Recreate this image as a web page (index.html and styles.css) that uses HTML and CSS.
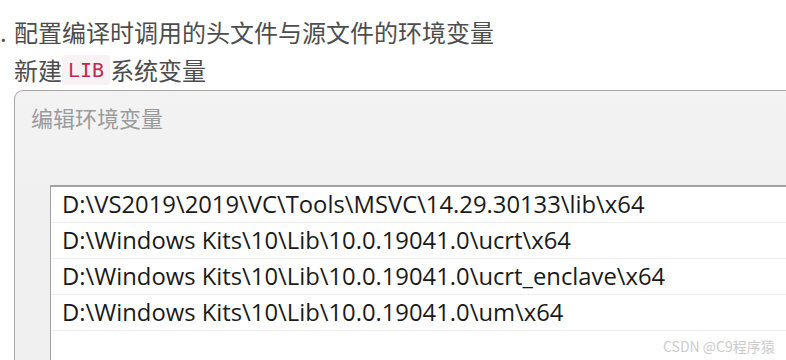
FILE: index.html
```html
<!DOCTYPE html>
<html lang="zh-CN">
<head>
<meta charset="utf-8">
<link rel="stylesheet" href="styles.css">
</head>
<body>
<div class="article">
  <p class="step"><span class="num">.</span>配置编译时调用的头文件与源文件的环境变量</p>
  <p class="sub">新建<code class="code">LIB</code>系统变量</p>
  <div class="dialog">
    <div class="titlebar">编辑环境变量</div>
    <div class="body">
      <ul class="listbox">
        <li class="row">D:\VS2019\2019\VC\Tools\MSVC\14.29.30133\lib\x64</li>
        <li class="row">D:\Windows Kits\10\Lib\10.0.19041.0\ucrt\x64</li>
        <li class="row">D:\Windows Kits\10\Lib\10.0.19041.0\ucrt_enclave\x64</li>
        <li class="row">D:\Windows Kits\10\Lib\10.0.19041.0\um\x64</li>
      </ul>
    </div>
  </div>
  <div class="watermark">CSDN @C9程序猿</div>
</div>
</body>
</html>
```

FILE: styles.css
```css
html, body {
  margin: 0;
  padding: 0;
  background: #ffffff;
  overflow: hidden;
}
.article {
  position: relative;
  width: 786px;
  height: 360px;
  overflow: hidden;
  font-family: "Noto Sans CJK SC", "Noto Sans", sans-serif;
  color: #4d4d4d;
}
.step {
  margin: 0;
  padding-top: 13px;
  font-size: 24px;
  line-height: 38px;
  display: flex;
}
.num {
  width: 14px;
  flex: none;
}
.sub {
  margin: 0;
  padding-left: 14px;
  font-size: 24px;
  line-height: 38px;
  display: flex;
  align-items: center;
}
.code {
  font-family: "DejaVu Sans Mono", "Liberation Mono", monospace;
  font-size: 20px;
  color: #c7254e;
  background: #f9f2f4;
  border-radius: 3px;
  padding: 0 6px;
  line-height: 30px;
}
.dialog {
  margin-left: 14px;
  margin-top: 1px;
  height: 300px;
  border: 1px solid #a8a8a8;
  border-right: none;
  border-bottom: none;
  border-top-left-radius: 9px;
  background: linear-gradient(#f3f3f4 0, #f2f2f3 55px, #f0f0f0 100px);
}
.titlebar {
  padding: 13px 0 0 16px;
  height: 50px;
  box-sizing: border-box;
  font-size: 22px;
  line-height: 26px;
  color: #9b9b9b;
}
.body {
  padding: 44px 0 0 35px;
}
.listbox {
  list-style: none;
  margin: 0;
  padding: 0;
  background: #ffffff;
  border-top: 2px solid #a0a0a0;
  border-left: 1px solid #a0a0a0;
  height: 200px;
}
.row {
  height: 35px;
  border-bottom: 1px solid #f0f0f0;
  padding-left: 11px;
  font-family: "Open Sans", "Noto Sans", sans-serif;
  font-size: 23.8px;
  line-height: 35px;
  color: #1a1a1a;
  white-space: nowrap;
}
.watermark {
  position: absolute;
  left: 663px;
  top: 336px;
  font-size: 14px;
  line-height: 20px;
  color: #cccccc;
  font-family: "Noto Sans CJK SC", "Noto Sans", sans-serif;
}
```
